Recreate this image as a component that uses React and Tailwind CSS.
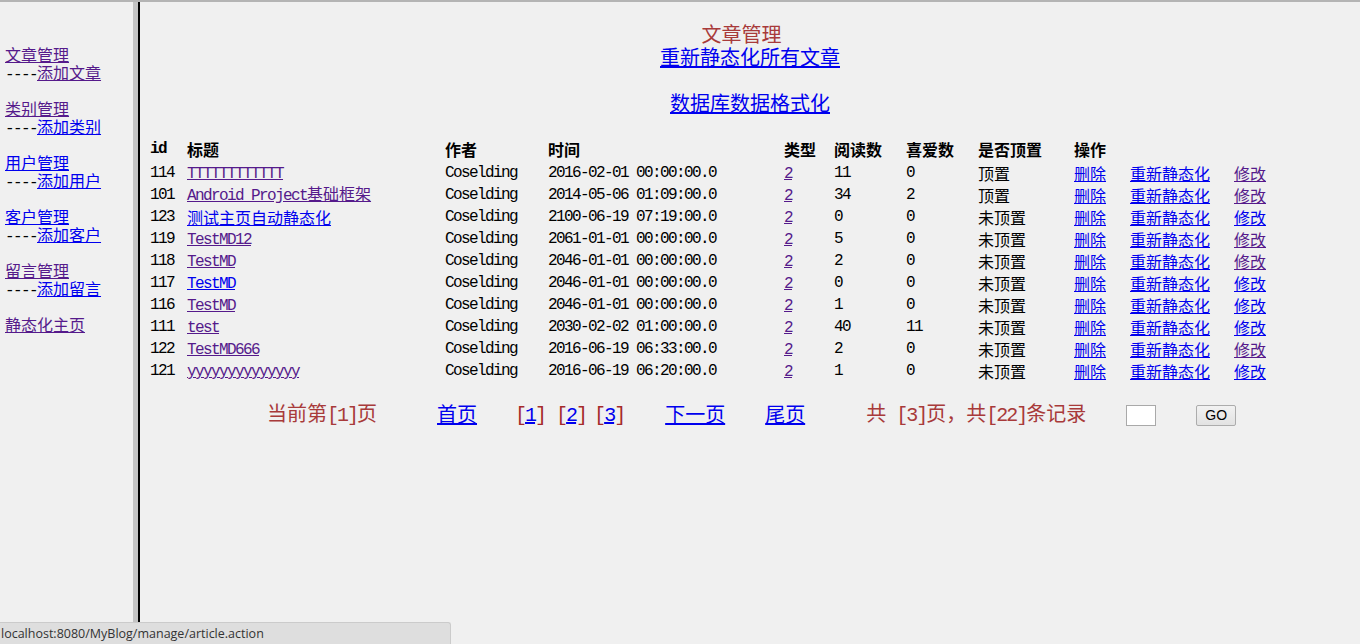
const CJK = "font-['Noto_Sans_CJK_SC',sans-serif]";
const MONO = "font-['Liberation_Mono','Noto_Sans_CJK_SC',monospace] tracking-[-1.6px]";
const MONO20 = "font-['Liberation_Mono','Noto_Sans_CJK_SC',monospace] tracking-[-2px]";

const BLUE = "text-[#0000ee] underline";
const PURPLE = "text-[#551a8b] underline";

const menu = [
  { title: "文章管理", tv: true, sub: "添加文章", sv: true },
  { title: "类别管理", tv: true, sub: "添加类别", sv: false },
  { title: "用户管理", tv: false, sub: "添加用户", sv: false },
  { title: "客户管理", tv: false, sub: "添加客户", sv: false },
  { title: "留言管理", tv: true, sub: "添加留言", sv: false },
];

const rows = [
  { id: "114", title: ["TTTTTTTTTTTT"], tv: true, time: "2016-02-01 00:00:00.0", read: "11", like: "0", top: "顶置", ev: true },
  { id: "101", title: ["Android Project", "基础框架"], tv: true, time: "2014-05-06 01:09:00.0", read: "34", like: "2", top: "顶置", ev: true },
  { id: "123", title: [null, "测试主页自动静态化"], tv: false, time: "2100-06-19 07:19:00.0", read: "0", like: "0", top: "未顶置", ev: false },
  { id: "119", title: ["TestMD12"], tv: true, time: "2061-01-01 00:00:00.0", read: "5", like: "0", top: "未顶置", ev: true },
  { id: "118", title: ["TestMD"], tv: true, time: "2046-01-01 00:00:00.0", read: "2", like: "0", top: "未顶置", ev: true },
  { id: "117", title: ["TestMD"], tv: false, time: "2046-01-01 00:00:00.0", read: "0", like: "0", top: "未顶置", ev: false },
  { id: "116", title: ["TestMD"], tv: true, time: "2046-01-01 00:00:00.0", read: "1", like: "0", top: "未顶置", ev: false },
  { id: "111", title: ["test"], tv: true, time: "2030-02-02 01:00:00.0", read: "40", like: "11", top: "未顶置", ev: false },
  { id: "122", title: ["TestMD666"], tv: true, time: "2016-06-19 06:33:00.0", read: "2", like: "0", top: "未顶置", ev: true },
  { id: "121", title: ["yyyyyyyyyyyyyy"], tv: true, time: "2016-06-19 06:20:00.0", read: "1", like: "0", top: "未顶置", ev: false },
];

const cols =
  "grid grid-cols-[37px_258px_103px_236px_50px_72px_72px_96px_56px_104px_60px] h-[22px] items-center leading-[22px]";

const Sidebar = () => (
  <div className={`w-[133px] shrink-0 pt-[43px] pl-[5px] text-[16px] leading-[18px] text-black ${CJK}`}>
    {menu.map((m) => (
      <div key={m.title} className="mb-[18px]">
        <div className="h-[18px] whitespace-nowrap">
          <a className={m.tv ? PURPLE : BLUE}>{m.title}</a>
        </div>
        <div className="h-[18px] whitespace-nowrap">
          <span className={MONO}>----</span>
          <a className={m.sv ? PURPLE : BLUE}>{m.sub}</a>
        </div>
      </div>
    ))}
    <div className="h-[18px]">
      <a className={PURPLE}>静态化主页</a>
    </div>
  </div>
);

const Bracket = ({ n }) => (
  <span className={`${MONO20} text-[#a52a2a]`}>
    [<a className={BLUE}>{n}</a>]
  </span>
);

const App = () => {
  return (
    <div className="relative h-[644px] bg-[#f0f0f0] border-t-2 border-[#b4b4b4] flex overflow-hidden">
      <Sidebar />
      <div className="w-[5px] shrink-0 bg-[#c3c3c3]"></div>
      <div className="w-[2px] shrink-0 bg-black"></div>

      <div className={`flex-1 flex flex-col text-[16px] text-black ${CJK}`}>
        <div className="pt-[20px] flex flex-col items-center text-[20px] leading-[23px]">
          <div className="text-[#a83a3a] mr-[17px]">文章管理</div>
          <a className={BLUE}>重新静态化所有文章</a>
          <a className={`${BLUE} mt-[23px]`}>数据库数据格式化</a>
        </div>

        <div className="mt-[24px] ml-[10px]">
          <div className={`${cols} font-bold`}>
            <span className={MONO}>id</span>
            <span>标题</span>
            <span>作者</span>
            <span>时间</span>
            <span>类型</span>
            <span>阅读数</span>
            <span>喜爱数</span>
            <span>是否顶置</span>
            <span>操作</span>
            <span></span>
            <span></span>
          </div>
          {rows.map((r) => (
            <div key={r.id} className={cols}>
              <span className={MONO}>{r.id}</span>
              <span className="whitespace-nowrap">
                <a className={r.tv ? PURPLE : BLUE}>
                  {r.title[0] && <span className={MONO}>{r.title[0]}</span>}
                  {r.title[1] && <span>{r.title[1]}</span>}
                </a>
              </span>
              <span className={MONO}>Coselding</span>
              <span className={MONO}>{r.time}</span>
              <span>
                <a className={`${PURPLE} ${MONO}`}>2</a>
              </span>
              <span className={MONO}>{r.read}</span>
              <span className={MONO}>{r.like}</span>
              <span>{r.top}</span>
              <span>
                <a className={BLUE}>删除</a>
              </span>
              <span>
                <a className={BLUE}>重新静态化</a>
              </span>
              <span>
                <a className={r.ev ? PURPLE : BLUE}>修改</a>
              </span>
            </div>
          ))}
        </div>

        <div className="mt-[22px] pl-[127px] flex items-center h-[23px] text-[20px] leading-[23px] whitespace-nowrap">
          <span className="text-[#a83a3a]">
            当前第<span className={MONO20}>[1]</span>页
          </span>
          <a className={`${BLUE} ml-[60px]`}>首页</a>
          <span className="ml-[38px]">
            <Bracket n="1" />
          </span>
          <span className="ml-[11px]">
            <Bracket n="2" />
          </span>
          <span className="ml-[8px]">
            <Bracket n="3" />
          </span>
          <a className={`${BLUE} ml-[41px]`}>下一页</a>
          <a className={`${BLUE} ml-[40px]`}>尾页</a>
          <span className="ml-[61px] text-[#a83a3a]">
            共<span className={MONO20}> [3]</span>页，共<span className={MONO20}>[22]</span>条记录
          </span>
          <input
            type="text"
            className="ml-[40px] mt-[4px] w-[30px] h-[21px] bg-white border border-[#a9a9a9] outline-none"
          />
          <button className="ml-[40px] mt-[4px] w-[40px] h-[21px] border border-[#acacac] rounded-[2px] bg-gradient-to-b from-[#f2f2f2] to-[#e2e2e2] text-[14px] leading-[19px] text-black font-['Liberation_Sans',sans-serif]">
            GO
          </button>
        </div>
      </div>

      <div className="absolute left-0 bottom-0 w-[451px] h-[22px] bg-[#dedede] border-t border-r border-[#cbcbcb] rounded-tr-[3px] pl-[1px] text-[12.5px] leading-[21px] text-[#333] font-['Open_Sans',sans-serif]">
        localhost:8080/MyBlog/manage/article.action
      </div>
    </div>
  );
};

export default App;
